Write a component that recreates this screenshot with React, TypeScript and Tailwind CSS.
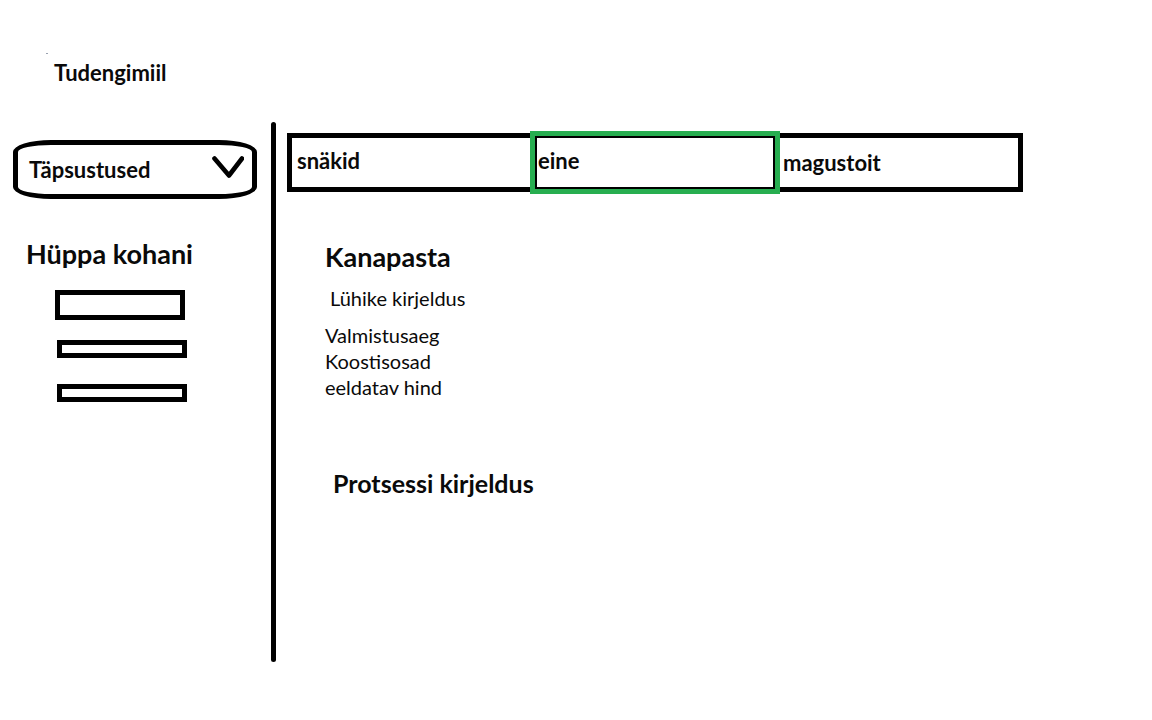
import { useState } from "react";

const tabs = [
  { id: "snakid", label: "snäkid", place: "pl-[5px] pb-1" },
  { id: "eine", label: "eine", place: "pl-[3px] pb-1" },
  { id: "magustoit", label: "magustoit", place: "pl-[7px]" },
];

const jumpLinks = [
  { id: "kirjeldus", label: "Kirjeldus", box: "h-[30px]" },
  { id: "andmed", label: "Andmed", box: "ml-[2px] mt-5 h-[18px]" },
  { id: "protsess", label: "Protsess", box: "ml-[2px] mt-[26px] h-[18px]" },
];

export default function App() {
  const [active, setActive] = useState("eine");

  return (
    <div className="bg-white pb-14 font-['Lato',sans-serif] text-[#0a0a0a]">
      <header className="h-[122px] pl-[46px] pt-[53px]">
        <div className="h-px w-[2px] bg-gray-400" />
        <h1 className="pl-2 pt-[7px] text-[22px] font-bold leading-6">Tudengimiil</h1>
      </header>

      <div className="flex min-h-[540px]">
        <aside className="w-[271px] shrink-0 pl-[13px] pr-[14px] pt-[18px]">
          <button
            type="button"
            className="flex h-[59px] w-full items-center justify-between rounded-[38px/12px] border-5 border-black pl-[11px] pr-[8px] text-[22px] font-bold leading-6"
          >
            Täpsustused
            <svg
              aria-hidden="true"
              viewBox="0 0 32 22"
              className="mb-[6px] h-[22px] w-8 text-black"
              fill="none"
              stroke="currentColor"
              strokeWidth="4.600"
              strokeLinecap="round"
              strokeLinejoin="round"
            >
              <path d="M2.500 2.500 17 19.500 30 2.500" />
            </svg>
          </button>

          <nav aria-labelledby="jump" className="pl-[13px] pt-10">
            <h2 id="jump" className="text-[27px] font-bold leading-[30px]">
              Hüppa kohani
            </h2>
            <ul className="pl-[29px] pt-[21px]">
              {jumpLinks.map((link) => (
                <li key={link.id}>
                  <a
                    href={`#${link.id}`}
                    aria-label={link.label}
                    className={`block w-[130px] border-5 border-black ${link.box}`}
                  />
                </li>
              ))}
            </ul>
          </nav>
        </aside>

        <div className="w-[5px] shrink-0 rounded-full bg-black" />

        <main className="min-w-0 flex-1 pl-[11px] pr-[129px] pt-[11px]">
          <div className="grid h-[59px] grid-cols-3 border-5 border-black">
            {tabs.map((tab) => (
              <button
                key={tab.id}
                type="button"
                aria-pressed={active === tab.id}
                onClick={() => setActive(tab.id)}
                className={`text-left text-[22px] font-bold leading-6 ${tab.place} ${
                  active === tab.id
                    ? "-mx-1 -my-[7px] border-5 border-[#27ae50] shadow-[inset_0_0_0_2px_#000]"
                    : ""
                }`}
              >
                {tab.label}
              </button>
            ))}
          </div>

          <article className="pl-[38px] pt-[50px]">
            <h2 id="kirjeldus" className="text-[27px] font-bold leading-[30px]">
              Kanapasta
            </h2>
            <p className="pl-[5px] pt-[13px] text-[20px] leading-[26px]">Lühike kirjeldus</p>
            <ul id="andmed" className="pt-[11px] text-[20px] leading-[26px]">
              <li>Valmistusaeg</li>
              <li>Koostisosad</li>
              <li>eeldatav hind</li>
            </ul>
            <h2 id="protsess" className="pl-2 pt-[68px] text-[25px] font-bold leading-[30px]">
              Protsessi kirjeldus
            </h2>
          </article>
        </main>
      </div>
    </div>
  );
}
